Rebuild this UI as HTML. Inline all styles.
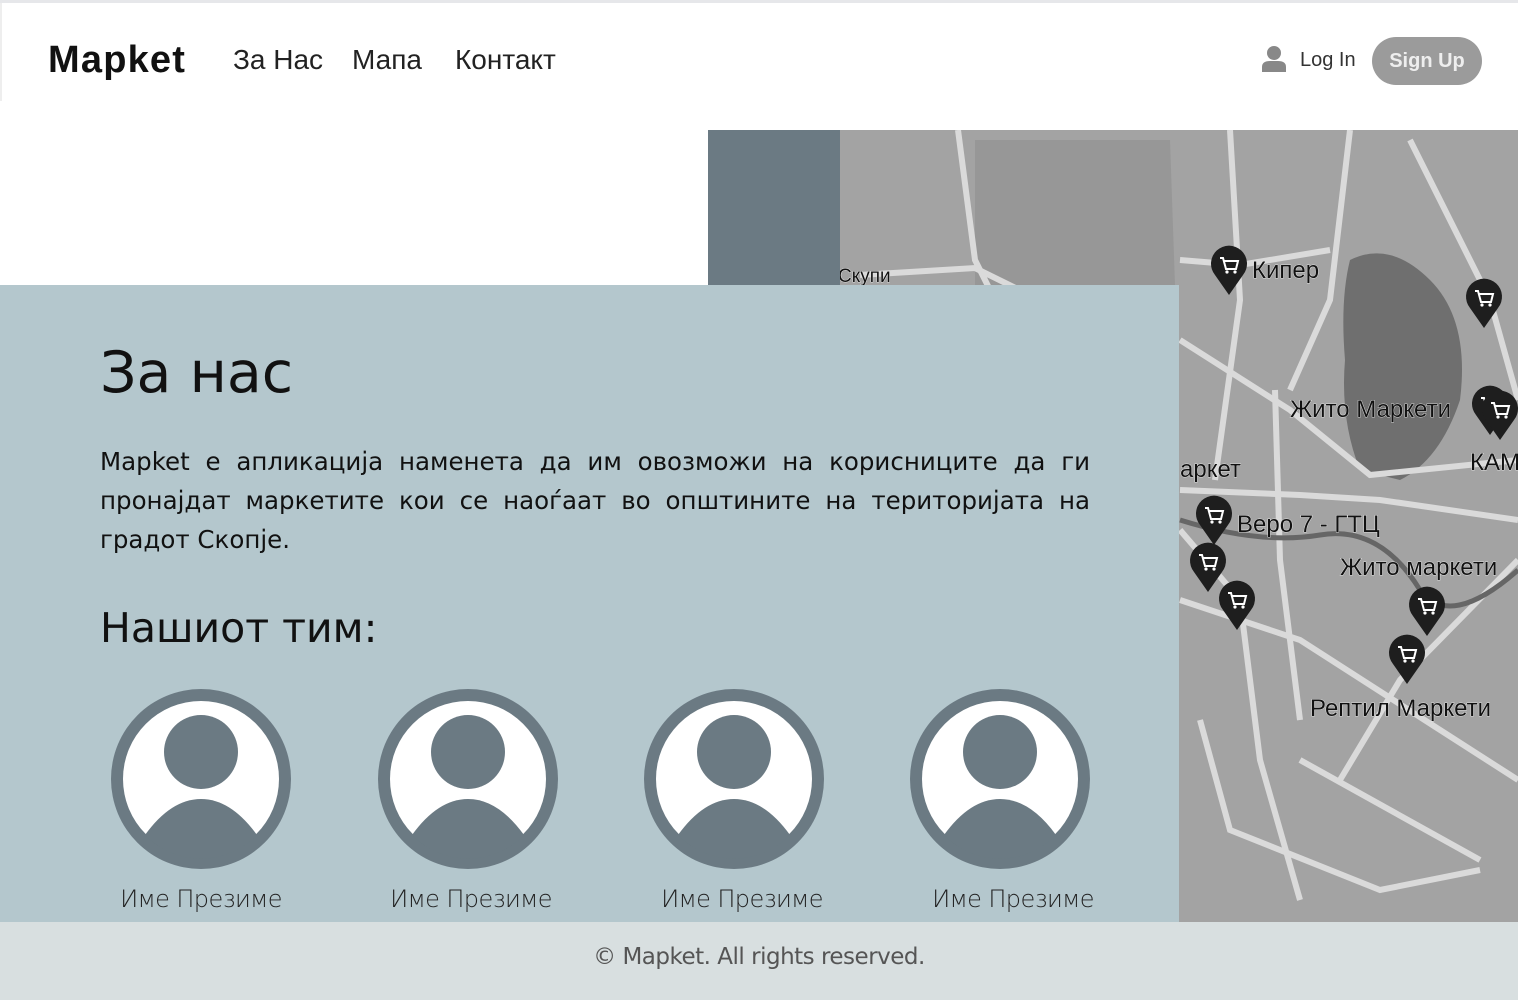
<!DOCTYPE html>
<html><head><meta charset="utf-8"><style>
*{margin:0;padding:0;box-sizing:border-box}
body{width:1518px;height:1000px;position:relative;overflow:hidden;background:#fff;font-family:"DejaVu Sans","Liberation Sans",sans-serif}
.top{position:absolute;left:0;top:0;width:1518px;height:3px;background:#e6e7ea}
.lb{position:absolute;left:0;top:3px;width:2px;height:98px;background:#eee}
.logo{position:absolute;left:48px;top:39px;font:bold 38px "Liberation Sans",sans-serif;color:#111;letter-spacing:1.2px}
.nav{position:absolute;top:44px;font:28px "Liberation Sans",sans-serif;color:#222}
.login{position:absolute;left:1300px;top:49px;font:20px "Liberation Sans",sans-serif;color:#333}
.signup{position:absolute;left:1372px;top:37px;width:110px;height:48px;border-radius:24px;background:#9b9b9b;color:#eee;font:bold 20px "Liberation Sans",sans-serif;text-align:center;line-height:48px}
.slate{position:absolute;left:708px;top:130px;width:132px;height:156px;background:#6b7a83}
.map{position:absolute;left:840px;top:130px;width:678px;height:792px}
.panel{position:absolute;left:0;top:285px;width:1179px;height:637px;background:#b4c7cd}
h1{position:absolute;left:100px;top:340px;font-weight:normal;font-size:57px;color:#111}
p{position:absolute;left:100px;top:442px;width:990px;font-size:24.5px;line-height:39px;color:#111;text-align:justify}
h2{position:absolute;left:100px;top:604px;font-weight:normal;font-size:41px;color:#111}
.av{position:absolute;top:689px;width:180px;height:180px}
.nm{position:absolute;top:885px;width:240px;text-align:center;font-size:24px;color:#222;font-weight:300;letter-spacing:-0.6px}
.foot{position:absolute;left:0;top:922px;width:1518px;height:78px;background:#d8dfe0;text-align:center;font:23px "DejaVu Sans",sans-serif;color:#555;line-height:70px;letter-spacing:-0.5px}
</style></head><body>
<div class="top"></div><div class="lb"></div>
<div class="logo">Mapket</div>
<div class="nav" style="left:233px">За Нас</div>
<div class="nav" style="left:352px">Мапа</div>
<div class="nav" style="left:455px">Контакт</div>
<svg style="position:absolute;left:1260px;top:45px" width="28" height="28" viewBox="0 0 28 28"><circle cx="14" cy="8" r="7" fill="#888"/><path d="M2 27 V22 Q2 16 10 16 H18 Q26 16 26 22 V27Z" fill="#888"/></svg>
<div class="login">Log In</div>
<div class="signup">Sign Up</div>
<div class="slate"></div>
<svg class="map" viewBox="840 130 678 792">
<defs>
<g id="pin"><path d="M0 30 L-14 10 A18 18 0 1 1 14 10Z" fill="#1e1e1e"/><path d="M-9 -7 H-6 L-3 4 H7 L9 -4 H-5" stroke="#fff" stroke-width="2" fill="none"/><circle cx="-2" cy="7" r="1.6" fill="#fff"/><circle cx="6" cy="7" r="1.6" fill="#fff"/></g>
</defs>
<rect x="840" y="130" width="678" height="792" fill="#a3a3a3"/>
<path d="M975 140 L1170 140 L1175 285 L975 285 Z" fill="#979797"/>
<path d="M1350 260 Q1390 240 1430 280 Q1470 320 1460 400 Q1440 460 1400 480 L1360 470 Q1340 420 1345 360 Q1340 300 1350 260Z" fill="#6f6f6f"/>
<g stroke="#dadada" fill="none" stroke-width="6">
<path d="M958 130 L975 260 L990 290"/><path d="M860 275 L975 268 L1040 300"/>
<path d="M1180 260 L1240 265 L1330 250"/><path d="M1180 340 L1290 410 L1370 475 L1518 460"/>
<path d="M1180 490 L1300 495 L1380 500 L1518 520"/><path d="M1275 390 L1280 560 L1300 720"/>
<path d="M1180 600 L1300 640 L1518 780"/><path d="M1230 130 L1240 300 L1215 480"/>
<path d="M1180 530 L1240 600 L1260 760 L1300 900"/><path d="M1300 760 L1480 860"/>
<path d="M1350 130 L1330 300 L1290 390"/><path d="M1410 140 L1490 300 L1518 400"/>
<path d="M1518 560 L1400 680 L1340 780"/><path d="M1200 720 L1230 830 L1380 890 L1480 870"/>
</g>
<path d="M1180 520 Q1260 545 1320 535 Q1380 525 1420 590 Q1450 630 1518 570" stroke="#666" stroke-width="5" fill="none"/>
<use href="#pin" x="1229" y="265"/><use href="#pin" x="1484" y="298"/>
<use href="#pin" x="1490" y="405"/><use href="#pin" x="1500" y="410"/>
<use href="#pin" x="1214" y="515"/><use href="#pin" x="1208" y="562"/>
<use href="#pin" x="1237" y="600"/><use href="#pin" x="1427" y="606"/>
<use href="#pin" x="1407" y="654"/>
<g font-family="Liberation Sans,sans-serif" font-size="24" fill="#111" stroke="#eee" stroke-width="0.8" paint-order="stroke">
<text x="1252" y="278">Кипер</text><text x="1290" y="417">Жито Маркети</text>
<text x="1180" y="477">аркет</text><text x="1470" y="470">КАМ</text>
<text x="1237" y="532">Веро 7 - ГТЦ</text><text x="1340" y="575">Жито маркети</text>
<text x="1310" y="716">Рептил Маркети</text><text x="838" y="282" font-size="19">Скупи</text>
</g>
</svg>
<div class="panel"></div>
<h1>За нас</h1>
<p>Mapket е апликација наменета да им овозможи на корисниците да ги пронајдат маркетите кои се наоѓаат во општините на територијата на градот Скопје.</p>
<h2>Нашиот тим:</h2>
<svg class="av" style="left:111px" viewBox="0 0 180 180"><circle cx="90" cy="90" r="90" fill="#6b7a83"/><circle cx="90" cy="90" r="78" fill="#fff"/><circle cx="90" cy="63" r="37" fill="#6b7a83"/><path d="M34 146 Q60 110 90 110 Q120 110 146 146 A78 78 0 0 1 34 146Z" fill="#6b7a83"/></svg>
<svg class="av" style="left:378px" viewBox="0 0 180 180"><circle cx="90" cy="90" r="90" fill="#6b7a83"/><circle cx="90" cy="90" r="78" fill="#fff"/><circle cx="90" cy="63" r="37" fill="#6b7a83"/><path d="M34 146 Q60 110 90 110 Q120 110 146 146 A78 78 0 0 1 34 146Z" fill="#6b7a83"/></svg>
<svg class="av" style="left:644px" viewBox="0 0 180 180"><circle cx="90" cy="90" r="90" fill="#6b7a83"/><circle cx="90" cy="90" r="78" fill="#fff"/><circle cx="90" cy="63" r="37" fill="#6b7a83"/><path d="M34 146 Q60 110 90 110 Q120 110 146 146 A78 78 0 0 1 34 146Z" fill="#6b7a83"/></svg>
<svg class="av" style="left:910px" viewBox="0 0 180 180"><circle cx="90" cy="90" r="90" fill="#6b7a83"/><circle cx="90" cy="90" r="78" fill="#fff"/><circle cx="90" cy="63" r="37" fill="#6b7a83"/><path d="M34 146 Q60 110 90 110 Q120 110 146 146 A78 78 0 0 1 34 146Z" fill="#6b7a83"/></svg>
<div class="nm" style="left:81px">Име Презиме</div>
<div class="nm" style="left:351px">Име Презиме</div>
<div class="nm" style="left:622px">Име Презиме</div>
<div class="nm" style="left:893px">Име Презиме</div>
<div class="foot">© Mapket. All rights reserved.</div>
</body></html>
